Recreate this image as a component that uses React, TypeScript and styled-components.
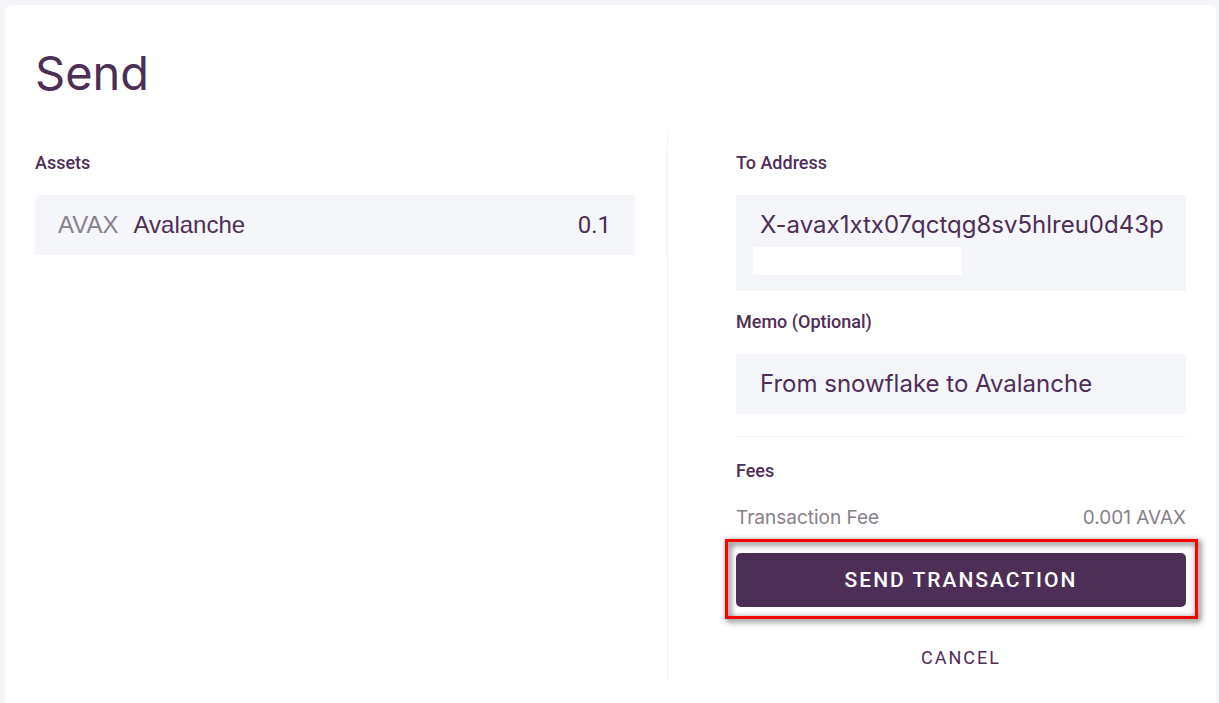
import React from "react";
import styled, { createGlobalStyle } from "styled-components";

const GlobalStyle = createGlobalStyle`
  * { box-sizing: border-box; }
  body {
    margin: 0;
    background: #f5f6fa;
    color: #4d2e56;
    font-family: Roboto, "Liberation Sans", sans-serif;
  }
  h1, h2, p, ul { margin: 0; padding: 0; }
`;

const Page = styled.div`
  min-height: 100vh;
  display: flex;
  padding: 5px 3px 0 5px;
`;

const Card = styled.main`
  flex: 1;
  padding: 35px 30px 23px;
  background: #fff;
  border-radius: 6px 6px 0 0;
`;

const Title = styled.h1`
  font-family: Inter, sans-serif;
  font-size: 47px;
  font-weight: 400;
  line-height: 66px;
`;

const Columns = styled.div`
  display: grid;
  grid-template-columns: minmax(0, 1fr) 519px;
  margin-top: 27px;
`;

const Assets = styled.section`
  align-self: start;
  margin-top: 17px;
  padding-right: 31px;
  border-right: 1px solid #f5f6fa;
`;

const Details = styled.section`
  padding: 0 0 10px 68px;
  border-left: 1px solid #f4f4f6;
`;

const Label = styled.h2<{ $top?: number }>`
  padding-top: ${({ $top = 0 }) => $top}px;
  font-size: 18px;
  font-weight: 500;
  line-height: 26px;
`;

const AssetList = styled.ul`
  margin-top: 19px;
  list-style: none;
`;

const AssetRow = styled.li`
  display: flex;
  gap: 15px;
  height: 60px;
  padding: 0 24px 0 23px;
  background: #f5f6fa;
  font-family: "Liberation Sans", Arial, sans-serif;
  font-size: 24px;
  line-height: 60px;
`;

const Symbol = styled.span`
  color: #87808a;
`;

const Amount = styled.span`
  margin-left: auto;
  font-family: Roboto, sans-serif;
`;

const Field = styled.div`
  margin-top: 19px;
  padding: 15px 16px 15px 24px;
  background: #f5f6fa;
  font-family: Inter, sans-serif;
  font-size: 24px;
  font-weight: 400;
  line-height: 30px;
`;

const Redacted = styled.div`
  width: 209px;
  height: 28px;
  margin: 7px 0 1px -7px;
  background: #fff;
`;

const Divider = styled.hr`
  height: 1px;
  margin: 22px 0 0;
  border: 0;
  background: #f4f4f6;
`;

const FeeRow = styled.p`
  display: flex;
  justify-content: space-between;
  margin-top: 21px;
  color: #87808a;
  font-family: Inter, sans-serif;
  font-size: 19px;
  line-height: 26px;
`;

const Highlight = styled.div`
  position: relative;
  margin-top: 22px;

  &::after {
    content: "";
    position: absolute;
    inset: -14px -12px -12px -11px;
    border: 3px solid #f00;
    filter: drop-shadow(2px 2px 3px rgba(0, 0, 0, 0.8));
    pointer-events: none;
  }
`;

const SendButton = styled.button`
  display: block;
  width: 100%;
  height: 54px;
  padding: 0;
  border: 0;
  border-radius: 5px;
  background: #4d2e56;
  color: #fff;
  font: 500 21px/54px Roboto, sans-serif;
  letter-spacing: 2px;
  text-transform: uppercase;
`;

const CancelButton = styled.button`
  display: block;
  margin: 38px auto 0;
  padding: 0;
  border: 0;
  background: none;
  color: #4d2e56;
  font: 400 18px/26px Roboto, sans-serif;
  letter-spacing: 2px;
  text-transform: uppercase;
`;

export default function App() {
  return (
    <>
      <GlobalStyle />
      <Page>
        <Card>
          <Title>Send</Title>
          <Columns>
            <Assets>
              <Label>Assets</Label>
              <AssetList>
                <AssetRow>
                  <Symbol>AVAX</Symbol>
                  <span>Avalanche</span>
                  <Amount>0.1</Amount>
                </AssetRow>
              </AssetList>
            </Assets>
            <Details>
              <Label $top={17}>To Address</Label>
              <Field>
                X-avax1xtx07qctqg8sv5hlreu0d43p
                <Redacted />
              </Field>
              <Label $top={18}>Memo (Optional)</Label>
              <Field>From snowflake to Avalanche</Field>
              <Divider />
              <Label $top={21}>Fees</Label>
              <FeeRow>
                <span>Transaction Fee</span>
                <span>0.001 AVAX</span>
              </FeeRow>
              <Highlight>
                <SendButton type="button">Send Transaction</SendButton>
              </Highlight>
              <CancelButton type="button">Cancel</CancelButton>
            </Details>
          </Columns>
        </Card>
      </Page>
    </>
  );
}
